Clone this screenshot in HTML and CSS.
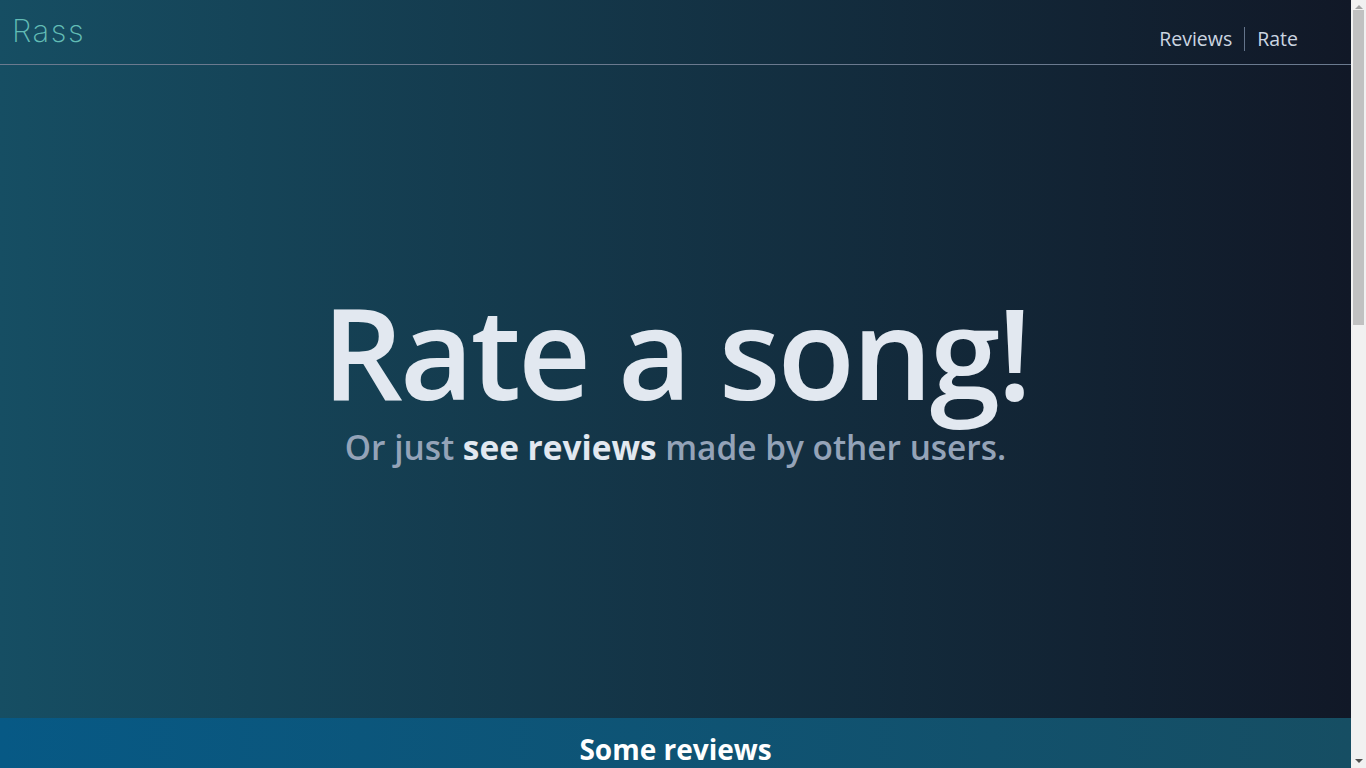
FILE: index.html
```html
<!DOCTYPE html>
<html lang="en">
<head>
<meta charset="utf-8">
<title>Rass</title>
<link rel="stylesheet" href="styles.css">
</head>
<body>
<div class="page">
  <div class="hero">
    <header class="topbar">
      <div class="logo">Rass</div>
      <nav class="nav">
        <a class="nav-link" href="#">Reviews</a>
        <span class="nav-sep"></span>
        <a class="nav-link" href="#">Rate</a>
      </nav>
    </header>
    <main class="hero-body">
      <h1 class="hero-title">Rate a song!</h1>
      <p class="hero-sub">Or just <strong>see reviews</strong> made by other users.</p>
    </main>
  </div>
  <section class="reviews">
    <h2 class="reviews-title">Some reviews</h2>
  </section>
</div>
<div class="scrollbar" aria-hidden="true">
  <span class="sb-arrow sb-up"></span>
  <span class="sb-track"><span class="sb-thumb"></span></span>
  <span class="sb-arrow sb-down"></span>
</div>
</body>
</html>
```
FILE: styles.css
```css
html, body {
  margin: 0;
  padding: 0;
  overflow: hidden;
}
body {
  font-family: "Open Sans", "Noto Sans", sans-serif;
  background: #111827;
  height: 768px;
}
.page {
  width: calc(100% - 15px);
}
.hero {
  height: 718px;
  display: flex;
  flex-direction: column;
  background: linear-gradient(to right, #164e63, #111827);
}
.topbar {
  height: 64px;
  border-bottom: 1px solid #6b7a8f;
  display: flex;
  justify-content: space-between;
  align-items: flex-start;
  padding: 0 53px 0 12px;
}
.logo {
  font-family: "Inter", sans-serif;
  font-weight: 200;
  font-size: 31px;
  letter-spacing: 1.5px;
  color: #62bcb5;
  margin-top: 12px;
}
.nav {
  display: flex;
  align-items: center;
  margin-top: 25px;
}
.nav-link {
  color: #cbd5e1;
  text-decoration: none;
  font-size: 19.5px;
}
.nav-sep {
  width: 1px;
  height: 24px;
  background: #64748b;
  margin: 0 12px;
}
.hero-body {
  flex: 1;
  display: flex;
  flex-direction: column;
  align-items: center;
  justify-content: center;
  padding-bottom: 46px;
}
.hero-title {
  margin: 0;
  font-size: 127px;
  font-weight: 600;
  line-height: 1.25;
  color: #e2e8f0;
  letter-spacing: -3px;
}
.hero-sub {
  margin: 0;
  font-size: 33.4px;
  line-height: 1;
  font-weight: 600;
  color: #94a3b8;
}
.hero-sub strong {
  color: #e2e8f0;
  font-weight: 700;
}
.reviews {
  height: 1072px;
  background: linear-gradient(to right, #075985, #164e63);
  padding-top: 12px;
  box-sizing: border-box;
}
.reviews-title {
  margin: 0;
  text-align: center;
  color: #ffffff;
  font-size: 28px;
  font-weight: 700;
}
.scrollbar {
  position: fixed;
  top: 0;
  right: 0;
  width: 15px;
  height: 100%;
  background: #f1f1f1;
  display: flex;
  flex-direction: column;
  align-items: center;
}
.sb-arrow {
  width: 0;
  height: 0;
  border-left: 4px solid transparent;
  border-right: 4px solid transparent;
}
.sb-up {
  border-bottom: 4px solid #a3a3a3;
  margin: 5px 0 1px;
}
.sb-down {
  border-top: 4px solid #505050;
  margin: 4px 0 5px;
}
.sb-track {
  flex: 1;
  width: 11px;
  display: flex;
  flex-direction: column;
}
.sb-thumb {
  width: 11px;
  height: 315px;
  background: #c1c1c1;
}
```
